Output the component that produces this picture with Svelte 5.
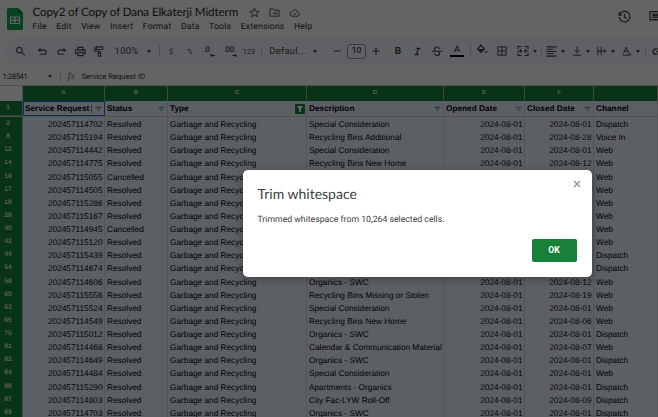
<script>
  const ids = [2, 8, 12, 14, 16, 17, 18, 28, 40, 42, 44, 54, 58, 60, 63, 65, 75, 81, 82, 84, 86, 87, 89];
  const requests = [
    '202457114702', '202457115194', '202457114442', '202457114775', '202457115055', '202457114505',
    '202457115286', '202457115167', '202457114945', '202457115120', '202457115439', '202457114674',
    '202457114606', '202457115556', '202457115524', '202457114549', '202457115012', '202457114468',
    '202457114649', '202457114484', '202457115290', '202457114803', '202457114703'
  ];
  const SC = 'Special Consideration', NH = 'Recycling Bins New Home', OR = 'Organics - SWC';
  const descriptions = [
    SC, 'Recycling Bins Additional', SC, NH, OR, SC, OR, NH, SC, OR, NH, OR, OR,
    'Recycling Bins Missing or Stolen', SC, NH, OR, 'Calendar & Communication Material',
    OR, SC, 'Apartments - Organics', 'City Fac-LYW Roll-Off', OR
  ];
  const closedDays = ['01', '28', '01', '12', '01', '01', '01', '01', '01', '01', '01', '01', '12', '19', '01', '06', '01', '07', '01', '01', '01', '09', '01'];
  const W = 'Web', D = 'Dispatch';
  const channels = [D, 'Voice In', W, W, W, W, W, W, W, W, D, D, W, W, W, W, D, W, D, W, D, D, D];
  const rows = ids.map((id, i) => ({
    id,
    request: requests[i],
    status: id === 16 || id === 40 ? 'Cancelled' : 'Resolved',
    description: descriptions[i],
    closed: '2024-08-' + closedDays[i],
    channel: channels[i]
  }));

  const headers = ['Service Request', 'Status', 'Type', 'Description', 'Opened Date', 'Closed Date', 'Channel'];
  const menus = ['File', 'Edit', 'View', 'Insert', 'Format', 'Data', 'Tools', 'Extensions', 'Help'];

  // Toolbar entries: kind, width, gap before
  const tools = [
    ['search', 11, 11], ['undo', 11, 11], ['redo', 11, 8], ['print', 11, 8], ['paint', 11, 8],
    ['t:100%', 25, 9], ['caret', 6, 7], ['sep', 1, 7], ['t:$', 10, 6], ['t:%', 10, 9],
    ['dec0', 12, 8], ['dec00', 14, 8], ['t:123', 14, 5], ['sep', 1, 5], ['t:Defaul...', 35, 8],
    ['caret', 6, 7], ['minus', 8, 15], ['size', 19, 6], ['plus', 8, 6], ['bold', 10, 13],
    ['italic', 11, 9], ['strike', 12, 8], ['color', 14, 7], ['sep', 1, 6], ['fill', 12, 5],
    ['borders', 10, 9], ['merge', 12, 10], ['caret', 6, 3], ['sep', 1, 3], ['align', 11, 4],
    ['caret', 6, 3], ['valign', 10, 6], ['caret', 6, 3], ['wrap', 10, 6], ['caret', 6, 3],
    ['rotate', 10, 6], ['caret', 6, 3], ['sep', 1, 4], ['link', 13, 6]
  ];
  const paths = {
    search: 'M9.500 3a6 6 0 1 0 0 12a6 6 0 0 0 0-12M14 13.500L21.500 21',
    undo: 'M7.500 5L3.500 9L7.500 13M4 9H15.500a4.500 4.500 0 0 1 0 9H7',
    redo: 'M16.500 5L20.500 9L16.500 13M20 9H8.500a4.500 4.500 0 0 0 0 9H17',
    print: 'M6.500 8V3H17.500V8M6 17H1.500V8.500H22.500V17H18M6.500 14H17.500V21H6.500ZM17.500 11.500h1',
    paint: 'M5 2H19V7.500H5ZM5 4.500H1.500V11.500H12V14M9.500 14.500H14.500V22.500H9.500Z',
    minus: 'M1 12H23',
    plus: 'M1 12H23M12 1V23',
    borders: 'M2 2H22V22H2ZM12 2V22M2 12H22',
    merge: 'M9 3H2V8M15 3H22V8M9 21H2V16M15 21H22V16M1 12H9M6 9L9 12L6 15M23 12H15M18 9L15 12L18 15',
    align: 'M1 2H23M1 7H16M1 12H23M1 17H16M1 22H23',
    valign: 'M12 1V16M6.500 10.500L12 16L17.500 10.500M2 22H22',
    wrap: 'M2 2V22M10 2V22M2 12H22M17 7L22 12L17 17',
    rotate: 'M3 18L10 3L17 18M6 13H14M2 22H20M18 17L22 22',
    link: 'M10 7H7a5 5 0 0 0 0 10h3M14 7h3a5 5 0 0 1 0 10h-3M8 12H16'
  };
</script>

<div class="app">
  <header>
    <svg class="logo" viewBox="0 0 16 22">
      <path d="M1.500 0H11L16 5V20.500Q16 22 14.500 22H1.500Q0 22 0 20.500V1.500Q0 0 1.500 0Z" fill="#0fa650" />
      <path d="M11 0L16 5H11Z" fill="#087838" />
      <path d="M3.500 9H12.500V15.500H3.500ZM3.500 12.200H12.500M8 9V15.500" fill="none" stroke="#fff" stroke-width="1.200" />
    </svg>
    <div class="names">
      <div class="title">
        <span>Copy2 of Copy of Dana Elkaterji Midterm</span>
        <svg viewBox="0 0 24 24" class="ic t1"><path d="M12 2.500L14.800 9L22 9.600L16.600 14.300L18.200 21.300L12 17.600L5.800 21.300L7.400 14.300L2 9.600L9.200 9Z" /></svg>
        <svg viewBox="0 0 24 24" class="ic t2"><path d="M2 4H9L11.500 7H22V20H2ZM9 13.500H17M14 10.500L17 13.500L14 16.500" /></svg>
        <svg viewBox="0 0 24 24" class="ic t3"><path d="M6.500 20a5 5 0 0 1-.6-10a6.500 6.500 0 0 1 12.400 1.200A4.500 4.500 0 0 1 18.500 20ZM8.500 14L11 16.500L15.500 12" /></svg>
      </div>
      <nav>{#each menus as m}<span>{m}</span>{/each}</nav>
    </div>
    <div class="right">
      <svg viewBox="0 0 24 24" class="ic hist"><path d="M2 4V9.500H7.500M3 9A9.800 9.800 0 1 1 2.500 13M12 7V13L16 15.500" /></svg>
      <svg viewBox="0 0 24 24" class="ic comm"><path d="M2 3H22V22L18 18H2ZM6 7.500H18M6 10.500H18M6 13.500H18" /></svg>
    </div>
  </header>

  <div class="toolbar">
    {#each tools as [kind, w, gap]}
      <div class="tool" style="width:{w}px;margin-left:{gap}px">
        {#if kind.startsWith('t:')}
          <span class="label" class:small={w < 16}>{kind.slice(2)}</span>
        {:else if kind === 'caret'}<i class="caret"></i>
        {:else if kind === 'sep'}<i class="sep"></i>
        {:else if kind === 'size'}<span class="size">10</span>
        {:else if kind === 'bold'}<b class="glyph">B</b>
        {:else if kind === 'italic'}
          <svg viewBox="0 0 24 24" class="ic heavy"><path d="M9 4H20M4 20H15M14.500 4L9.500 20" /></svg>
        {:else if kind === 'strike'}
          <svg viewBox="0 0 24 24" class="ic"><path d="M1 12.500H23M17 8Q16 4 12 4Q7 4 7 8Q7 10 9 11M7 17Q8 21 12 21Q17 21 17 17Q17 15 16 14" /></svg>
        {:else if kind === 'color'}<span class="color">A</span>
        {:else if kind === 'dec0'}
          <span class="dec">.0<svg viewBox="0 0 24 24"><path d="M23 12H3M10 5L3 12L10 19" /></svg></span>
        {:else if kind === 'dec00'}
          <span class="dec">.00<svg viewBox="0 0 24 24"><path d="M1 12H21M14 5L21 12L14 19" /></svg></span>
        {:else if kind === 'fill'}
          <svg viewBox="0 0 24 24" class="ic up"><path d="M8 1L17 10L10 17L3 10L10 3" /><path d="M4 10H16L10 16Z" class="solid" /><circle cx="20.500" cy="16" r="2" class="solid" /></svg>
        {:else}
          <svg viewBox="0 0 24 24" class="ic" class:tiny={kind === 'minus' || kind === 'plus'}><path d={paths[kind]} /></svg>
        {/if}
      </div>
    {/each}
  </div>

  <div class="formula">
    <span class="range">1:28541</span><i class="caret"></i><i class="bar"></i><em>fx</em><span>Service Request ID</span>
  </div>

  <div class="sheet">
    <div class="row letters">
      <div class="corner"></div>
      {#each ['A', 'B', 'C', 'D', 'E', 'F', ''] as l}<div>{l}</div>{/each}
    </div>
    <div class="row head">
      <div class="num">1</div>
      {#each headers as h, i}
        <div class="cell" class:active={i === 0}>
          <span>{h}</span>
          {#if i === 0}<i class="cut"></i>{/if}
          {#if i === 2}
            <svg class="filter on" viewBox="0 0 10 10"><rect width="10" height="10" rx="1" /><path d="M2 2H8L6 5V8H4V5Z" /></svg>
          {:else if i < 6}
            <svg class="filter" viewBox="0 0 8 6"><path d="M.500 1H7.500M2 3H6M3.300 5H4.700" /></svg>
          {/if}
        </div>
      {/each}
    </div>
    <div class="freeze"></div>
    {#each rows as r}
      <div class="row">
        <div class="num">{r.id}</div>
        <div class="cell n">{r.request}</div>
        <div class="cell">{r.status}</div>
        <div class="cell">Garbage and Recycling</div>
        <div class="cell">{r.description}</div>
        <div class="cell n">2024-08-01</div>
        <div class="cell n">{r.closed}</div>
        <div class="cell">{r.channel}</div>
      </div>
    {/each}
  </div>

  <div class="scrim"></div>
  <div class="dialog" role="dialog" aria-label="Trim whitespace">
    <div class="dhead">
      <h1>Trim whitespace</h1>
      <svg viewBox="0 0 8 8"><path d="M1 1L7 7M7 1L1 7" /></svg>
    </div>
    <p>Trimmed whitespace from 10,264 selected cells.</p>
    <button>OK</button>
  </div>
</div>

<style>
  :global(body) { overflow: hidden; }
  .app {
    position: relative; width: 658px; height: 417px; overflow: hidden; background: #f9fbfd;
    font-family: Roboto, "Liberation Sans", sans-serif; color: #1f1f1f; text-rendering: geometricPrecision;
  }
  header { display: flex; height: 37px; }
  .logo { width: 16px; height: 22px; margin: 8px 0 0 7px; }
  .names { margin-left: 9.500px; padding-top: 5px; }
  .title { display: flex; align-items: center; height: 15px; font-family: Lato, sans-serif; font-size: 11.600px; white-space: nowrap; }
  .title span { width: 216px; letter-spacing: -.1px; }
  .ic { width: 100%; fill: none; stroke: #444746; stroke-width: 2.400; overflow: visible; }
  .title .ic { width: 11px; height: 11px; stroke-width: 2; }
  .title .t2 { margin-left: 9px; }
  .title .t3 { width: 12px; margin-left: 9px; }
  nav { display: flex; gap: 9.500px; height: 13px; padding-top: .5px; line-height: 13px; font-size: 8.600px; letter-spacing: .2px; }
  .right { display: flex; margin-left: auto; padding-top: 10px; }
  .right .hist { width: 13px; height: 13px; }
  .right .comm { width: 13px; height: 13px; margin: 0 -4px 0 18px; }
  .toolbar { display: flex; align-items: center; height: 28px; margin: 0 0 0 4px; border-radius: 14px 0 0 14px; background: #edf2fa; overflow: hidden; }
  .tool { flex: none; display: flex; align-items: center; justify-content: center; height: 28px; white-space: nowrap; }
  .label { font-size: 9.500px; letter-spacing: .2px; color: #444746; }
  .label.small { font-size: 7.300px; letter-spacing: 0; }
  .caret { border: 2.500px solid transparent; border-top: 3px solid #444746; border-bottom: 0; }
  .sep { width: 1px; height: 12px; background: #c7c9cc; }
  .size { box-sizing: border-box; width: 20px; height: 15px; border: 1px solid #8f9291; border-radius: 3px; font-size: 8.500px; line-height: 13px; text-align: center; }
  .tiny { stroke-width: 3.500; }
  .glyph { font-size: 10px; color: #444746; }
  .heavy { stroke-width: 3.500; width: 9px; }
  .color { width: 14px; height: 11px; box-sizing: border-box; border-bottom: 2px solid #000; font-size: 9px; line-height: 8px; text-align: center; font-weight: 500; color: #444746; }
  .dec { position: relative; width: 100%; height: 12px; font-size: 8px; line-height: 9px; font-weight: 500; color: #444746; }
  .dec svg { position: absolute; right: 0; bottom: -1px; width: 5px; height: 5px; fill: none; stroke: #444746; stroke-width: 5; }
  .up { margin-bottom: 3px; }
  .solid { fill: #444746; stroke: none; }
  .formula { display: flex; align-items: center; height: 17px; margin-top: 3px; font-size: 7.650px; color: #333; }
  .range { width: 45px; padding-left: 2.500px; letter-spacing: -.4px; }
  .formula .bar { width: 1px; height: 11px; margin: 0 7px 0 8px; background: #c7c9cc; }
  .formula em { width: 14px; font: italic 10px "Liberation Serif", serif; color: #5f6368; }
  .sheet { border-top: 1px solid #c0c0c0; }
  .row { display: grid; grid-template-columns: 23px 82px 63px 139px 137px 81px 69px 1fr; height: 13.140px; background: #ced6e2; }
  .letters { height: 15px; }
  .letters div { border-right: 1px solid #9bb5a2; background: #188038; color: #d4e5d8; font: bold 6px/15px "Liberation Sans", sans-serif; text-align: center; }
  .letters .corner { background: #f8f9fa; border-color: #c0c0c0; }
  .num { box-sizing: border-box; padding-right: 6px; border-bottom: 1px solid #7fa58b; border-right: 1px solid #a9bdae; background: #188038; color: #d4e5d8; font: bold 6.700px/13px "Liberation Sans", sans-serif; text-align: center; }
  .cell { box-sizing: border-box; padding: 0 2px; border-right: 1px solid #ced6e2; border-bottom: 1px solid #ced6e2; background: #e7f0fd; color: #000; font: 8.270px/15px "Liberation Sans", sans-serif; white-space: nowrap; }
  .n { text-align: right; padding-right: 1.500px; }
  .head { height: 13px; }
  .head .cell { display: flex; align-items: center; border-bottom: 0; font-weight: bold; line-height: 13px; }
  .head .active { border: 1px solid #1a73e8; padding-left: 1px; }
  .cut { width: 1px; height: 8px; margin-left: 2px; background: #888; }
  .filter { width: 7px; height: 6px; margin-left: auto; fill: none; stroke: #4d9668; stroke-width: 1; }
  .filter.on { width: 10px; height: 10px; margin-right: -1px; fill: #188038; stroke: none; }
  .filter.on path { fill: #fff; }
  .freeze { height: 3px; background: #c9c7c2; }
  .scrim { position: absolute; inset: 0; background: rgba(0, 0, 0, .6); }
  .dialog { position: absolute; left: 242.500px; top: 170px; box-sizing: border-box; width: 349.500px; height: 107px; padding: 15px; border-radius: 5px; background: #fff; box-shadow: 0 2px 8px rgba(0, 0, 0, .35); }
  .dhead { display: flex; justify-content: space-between; height: 18px; }
  h1 { margin: 0; font: 400 14px/18px Lato, sans-serif; color: #3c4043; }
  .dhead svg { width: 8px; height: 8px; margin: -5px -4px 0 0; stroke: #999; stroke-width: 1.500; }
  p { margin: 10px 0 0; font-size: 8.700px; line-height: 14px; color: #3c4043; }
  button { display: block; width: 45px; height: 23px; margin: 12px .5px 0 auto; padding: 0 0 1px; border: 0; border-radius: 2px; background: #188038; color: #fff; font: bold 8.700px Roboto, sans-serif; }
</style>
